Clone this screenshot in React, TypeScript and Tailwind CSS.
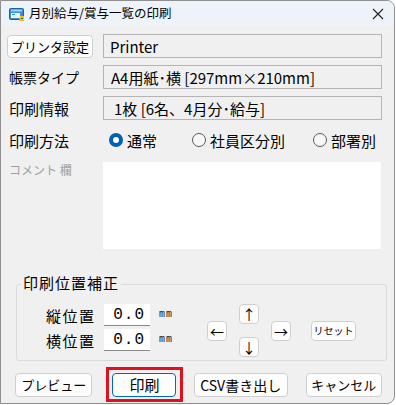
import React from "react";

const F = { fontFamily: '"Noto Sans CJK JP", "Noto Sans", sans-serif' };
const MONO = { fontFamily: '"Liberation Mono", "DejaVu Sans Mono", monospace' };

function Btn({ children, className = "" }: { children: React.ReactNode; className?: string }) {
  return (
    <div
      className={
        "flex items-center justify-center whitespace-nowrap rounded-[4px] border border-[#cfcfcf] bg-[#fdfdfd] leading-none text-black " +
        className
      }
    >
      {children}
    </div>
  );
}

function Field({ children, className = "" }: { children: React.ReactNode; className?: string }) {
  return (
    <div
      className={
        "flex h-[24px] w-[279px] items-center whitespace-nowrap border border-[#b4b4b4] bg-[#f0f0f0] text-[15px] leading-none text-black " +
        className
      }
    >
      {children}
    </div>
  );
}

function Radio({ checked, label, className = "" }: { checked?: boolean; label: string; className?: string }) {
  return (
    <div className={"flex items-center gap-[4px] " + className}>
      {checked ? (
        <span className="flex h-[14px] w-[14px] items-center justify-center rounded-full bg-[#005fb8]">
          <span className="h-[6px] w-[6px] rounded-full bg-white" />
        </span>
      ) : (
        <span className="h-[14px] w-[14px] rounded-full border border-[#5a5a5a] bg-[#f7f7f7]" />
      )}
      <span className="whitespace-nowrap text-[15px] leading-none text-black">{label}</span>
    </div>
  );
}

function PosRow({ label }: { label: string }) {
  return (
    <div className="flex items-center">
      <span className="w-[58px] whitespace-nowrap text-[15px] leading-none tracking-[1.5px] text-black">{label}</span>
      <div
        className="flex h-[22px] w-[46px] items-center justify-end border-b border-[#8a8a8a] bg-white pr-[5px] text-[16px] leading-none tracking-[1px] text-black"
        style={MONO}
      >
        0.0
      </div>
      <span className="ml-[9px] text-[10px] leading-none tracking-[1px] text-[#111]" style={MONO}>
        mm
      </span>
    </div>
  );
}

export default function App() {
  return (
    <div className="h-[405px] w-[396px] bg-white" style={F}>
      <div className="flex h-[404px] w-[395px] flex-col overflow-hidden rounded-r-[8px] border border-[#8f8f8f] bg-[#f0f0f0]">
        {/* title bar */}
        <div className="flex h-[25px] shrink-0 items-center bg-[#eef3f9] pl-[8px] pr-[9px]">
          <svg width="16" height="16" viewBox="0 0 16 16" className="mr-[4px]">
            <rect x="0.5" y="2.5" width="14" height="11" rx="1" fill="#3b8fd9" stroke="#1e5f9e" />
            <rect x="2" y="3.5" width="11" height="2" fill="#9fd0ff" />
            <rect x="2" y="7" width="9" height="5" fill="#e8f3ff" />
            <rect x="3" y="8" width="3" height="1" fill="#3b8fd9" />
            <path d="M11 10 h4 v5 h-5 z" fill="#f5c400" />
            <path d="M12 12.5 h2" stroke="#1e5f9e" strokeWidth="1" />
          </svg>
          <span className="text-[12.5px] leading-none text-black">月別給与/賞与一覧の印刷</span>
          <div className="flex-1" />
          <svg width="14" height="14" viewBox="0 0 14 14">
            <path d="M2 2 L12 12 M12 2 L2 12" stroke="#222" strokeWidth="1.1" />
          </svg>
        </div>

        {/* body */}
        <div className="flex flex-1 flex-col pl-[6px] pr-[12px] pt-[8px]">
          <div className="flex h-[24px] items-center justify-between">
            <Btn className="h-[23px] w-[86px] text-[13px]">プリンタ設定</Btn>
            <Field className="pl-[6px]">Printer</Field>
          </div>
          <div className="mt-[7px] flex h-[24px] items-center justify-between">
            <span className="pl-[2px] text-[14px] leading-none text-black">帳票タイプ</span>
            <Field className="pl-[7px]">A4用紙･横 [297mm×210mm]</Field>
          </div>
          <div className="mt-[7px] flex h-[24px] items-center justify-between">
            <span className="pl-[2px] text-[15px] leading-none text-black">印刷情報</span>
            <Field className="pl-[10px]">1枚 [6名、4月分･給与]</Field>
          </div>
          <div className="mt-[9px] flex h-[22px] items-center">
            <span className="w-[102px] pl-[2px] text-[15px] leading-none text-black">印刷方法</span>
            <Radio checked label="通常" />
            <Radio label="社員区分別" className="ml-[35px]" />
            <Radio label="部署別" className="ml-[28px]" />
          </div>
          <div className="mt-[11px] flex">
            <span className="w-[96px] whitespace-nowrap pl-[2px] pt-[2px] text-[12px] leading-none text-[#a0a0a0]">コメント 欄</span>
            <div className="h-[87px] w-[278px] bg-white" />
          </div>

          {/* group box */}
          <div className="relative ml-[9px] mt-[35px] h-[77px] w-[371px] rounded-[3px] border border-[#dadada]">
            <span className="absolute left-[4px] top-[-10px] whitespace-nowrap bg-[#f0f0f0] px-[2px] text-[15px] leading-none tracking-[1px] text-black">
              印刷位置補正
            </span>
            <div className="flex pt-[19px]">
              <div className="flex flex-col gap-[3px] pl-[29px]">
                <PosRow label="縦位置" />
                <PosRow label="横位置" />
              </div>
              <div className="ml-[34px] flex items-center">
                <Btn className="h-[20px] w-[20px] text-[14px]">←</Btn>
                <div className="ml-[12px] flex flex-col gap-[13px]">
                  <Btn className="h-[20px] w-[20px] text-[14px]">↑</Btn>
                  <Btn className="h-[20px] w-[20px] text-[14px]">↓</Btn>
                </div>
                <Btn className="ml-[12px] h-[20px] w-[20px] text-[14px]">→</Btn>
                <Btn className="ml-[20px] h-[20px] w-[45px] text-[10px]">リセット</Btn>
              </div>
            </div>
          </div>

          {/* bottom buttons */}
          <div className="mt-[6px] flex items-center pl-[8px]">
            <Btn className="h-[24px] w-[78px] text-[13px]">プレビュー</Btn>
            <div className="ml-[14px] flex h-[35px] w-[77px] items-center justify-center border-[3px] border-[#e0101e]">
              <div className="flex h-[24px] w-[64px] items-center justify-center rounded-[4px] border border-[#0067c0] bg-[#fdfdfd] text-[15px] leading-none text-black">
                印刷
              </div>
            </div>
            <Btn className="ml-[11px] h-[24px] w-[95px] text-[14px]">CSV書き出し</Btn>
            <Btn className="ml-[18px] h-[24px] w-[77px] text-[13px]">キャンセル</Btn>
          </div>
        </div>
      </div>
    </div>
  );
}
